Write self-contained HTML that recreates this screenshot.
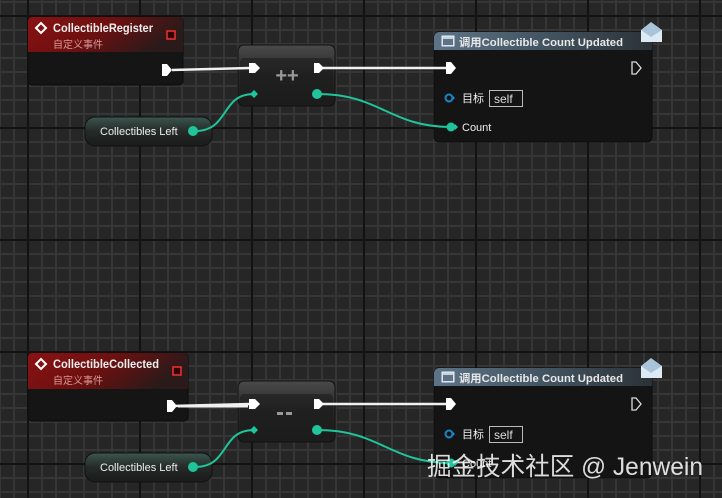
<!DOCTYPE html>
<html><head><meta charset="utf-8"><style>
html,body{margin:0;padding:0;width:722px;height:498px;overflow:hidden;background:#262626}
svg{display:block}
text{font-family:"Liberation Sans","Noto Sans CJK SC",sans-serif}
</style></head><body>
<svg width="722" height="498" viewBox="0 0 722 498" xmlns="http://www.w3.org/2000/svg">
<defs>
<pattern id="minor" x="13" y="1" width="14" height="14" patternUnits="userSpaceOnUse">
<rect width="14" height="14" fill="#262626"/>
<rect x="0" y="0" width="2" height="14" fill="#363636"/>
<rect x="0" y="0" width="14" height="2" fill="#363636"/>
</pattern>
<pattern id="major" x="27" y="15" width="112" height="112" patternUnits="userSpaceOnUse">
<rect x="0" y="0" width="2" height="112" fill="#121212"/>
<rect x="0" y="0" width="112" height="2" fill="#121212"/>
</pattern>
<linearGradient id="red" x1="0" y1="0" x2="1" y2="0.3">
<stop offset="0" stop-color="#8a1212"/><stop offset="0.55" stop-color="#6a1010"/><stop offset="1" stop-color="#2a1a1a"/>
</linearGradient>
<linearGradient id="blue" x1="0" y1="0" x2="1" y2="0">
<stop offset="0" stop-color="#5d7487"/><stop offset="0.6" stop-color="#3e4e5a"/><stop offset="1" stop-color="#2b3238"/>
</linearGradient>
<linearGradient id="gl" x1="0" y1="0" x2="0" y2="1">
<stop offset="0" stop-color="#4a4a4a"/><stop offset="0.5" stop-color="#262626"/><stop offset="1" stop-color="#1b1b1b"/>
</linearGradient>
<linearGradient id="vg" x1="0" y1="0" x2="0" y2="1">
<stop offset="0" stop-color="#3a564e"/><stop offset="0.5" stop-color="#252a28"/><stop offset="1" stop-color="#1a1a1a"/>
</linearGradient>
<g id="nodes">
<!-- op node -->
<rect x="238" y="45" width="97" height="61" rx="6" fill="url(#gl)" stroke="#111" stroke-width="1"/>
<rect x="240" y="58" width="93" height="46" rx="4" fill="#1d1d1d" opacity="0.6"/>
<!-- getter -->
<rect x="85" y="117" width="127" height="29" rx="10" fill="url(#vg)" stroke="#111"/>
<text x="100" y="135" font-size="11" fill="#eee">Collectibles Left</text>
<!-- call node -->
<rect x="434" y="32" width="218" height="110" rx="5" fill="#141414" stroke="#0c0c0c"/>
<path d="M434 50 v-13 a5 5 0 0 1 5 -5 h208 a5 5 0 0 1 5 5 v13 z" fill="url(#blue)"/>
<rect x="442" y="36" width="12" height="10" fill="#c8d4dc" stroke="#eef" stroke-width="1"/>
<rect x="443" y="39" width="10" height="6" fill="#5d7487"/>
<text x="459" y="46" font-size="11" font-weight="bold" fill="#e8e8e8" textLength="164" lengthAdjust="spacingAndGlyphs">调用Collectible Count Updated</text>
<path d="M632 62 h4 l5 6 l-5 6 h-4 z" fill="none" stroke="#ddd" stroke-width="1.3"/>
<circle cx="449" cy="98" r="3.5" fill="none" stroke="#1a86c8" stroke-width="2"/>
<path d="M453 96 l2 2 l-2 2" fill="#1a86c8"/>
<text x="462" y="102" font-size="11" fill="#eee">目标</text>
<rect x="489.5" y="90.5" width="33" height="16" fill="none" stroke="#bbb"/>
<text x="494" y="103" font-size="12" fill="#ddd">self</text>
<text x="462" y="131" font-size="11" fill="#eee">Count</text>
<path d="M641 30 L651 22 L662 30 V42 H641 Z" fill="#a9c3d8"/>
<path d="M641 30 L651 37 L662 30 V42 H641 Z" fill="#dde9f3"/>
</g>
<g id="wires">
<path d="M172 70 L250 68" stroke="#f0f0f0" stroke-width="2.5" fill="none"/>
<path d="M322 68 L448 68" stroke="#f0f0f0" stroke-width="2.5" fill="none"/>
<path d="M195 131 C230 131,220 94,254 94" stroke="#1fc49a" stroke-width="2" fill="none"/>
<path d="M318 94 C380 94,390 127,451 127" stroke="#1fc49a" stroke-width="2" fill="none"/>
<path d="M249 63 h6 l5 5 l-5 5 h-6 z" fill="#fff"/>
<path d="M314 63 h5 l5 5 l-5 5 h-5 z" fill="#fff"/>
<path d="M250 94 l4 -4 l4 4 l-4 4 z" fill="#1fc49a"/>
<circle cx="317" cy="94" r="5" fill="#1fc49a"/>
<circle cx="193" cy="131" r="5" fill="#1fc49a"/>
<path d="M446 62 h5 l5 6 l-5 6 h-5 z" fill="#fff"/>
<circle cx="451" cy="127" r="4.5" fill="#1fc49a"/>
<path d="M455 124 l3 3 l-3 3z" fill="#1fc49a"/>
</g>
</defs>
<rect width="722" height="498" fill="url(#minor)"/>
<rect width="722" height="498" fill="url(#major)"/>

<!-- top event node -->
<rect x="28" y="17" width="155" height="68" rx="4" fill="#151515" stroke="#0c0c0c"/>
<path d="M28 52 V21 a4 4 0 0 1 4 -4 h147 a4 4 0 0 1 4 4 V52 z" fill="url(#red)"/>
<use href="#nodes"/>
<path d="M36 28 l5 -5 l5 5 l-5 5 z" fill="none" stroke="#fff" stroke-width="2"/>
<text x="53" y="32" font-size="11.5" font-weight="bold" fill="#eee" textLength="100" lengthAdjust="spacingAndGlyphs">CollectibleRegister</text>
<text x="53" y="48" font-size="10" fill="#d89898">自定义事件</text>
<rect x="167" y="31" width="8" height="8" fill="#300" stroke="#e33" stroke-width="1.5"/>
<text x="287" y="82" font-size="20" font-weight="bold" fill="#999" text-anchor="middle">++</text>
<use href="#wires"/>
<path d="M162 64 h5 l5 6 l-5 6 h-5 z" fill="#fff"/>

<!-- bottom -->
<rect x="28" y="353" width="160" height="68" rx="4" fill="#151515" stroke="#0c0c0c"/>
<path d="M28 389 V357 a4 4 0 0 1 4 -4 h152 a4 4 0 0 1 4 4 V389 z" fill="url(#red)"/>
<g transform="translate(0,336)"><use href="#nodes"/></g>
<path d="M36 364 l5 -5 l5 5 l-5 5 z" fill="none" stroke="#fff" stroke-width="2"/>
<text x="53" y="368" font-size="11.5" font-weight="bold" fill="#eee" textLength="106" lengthAdjust="spacingAndGlyphs">CollectibleCollected</text>
<text x="53" y="384" font-size="10" fill="#d89898">自定义事件</text>
<rect x="173" y="367" width="8" height="8" fill="#300" stroke="#e33" stroke-width="1.5"/>
<rect x="277" y="412" width="6" height="3" fill="#999"/>
<rect x="286" y="412" width="6" height="3" fill="#999"/>
<g transform="translate(0,336)"><use href="#wires"/></g>
<rect x="178" y="405" width="70" height="2.5" fill="#f0f0f0"/>
<path d="M167 400 h5 l5 6 l-5 6 h-5 z" fill="#fff"/>

<text x="427" y="475" font-size="25" fill="#fff" fill-opacity="0.85" textLength="276" lengthAdjust="spacingAndGlyphs">掘金技术社区 @ Jenwein</text>
</svg>
</body></html>
